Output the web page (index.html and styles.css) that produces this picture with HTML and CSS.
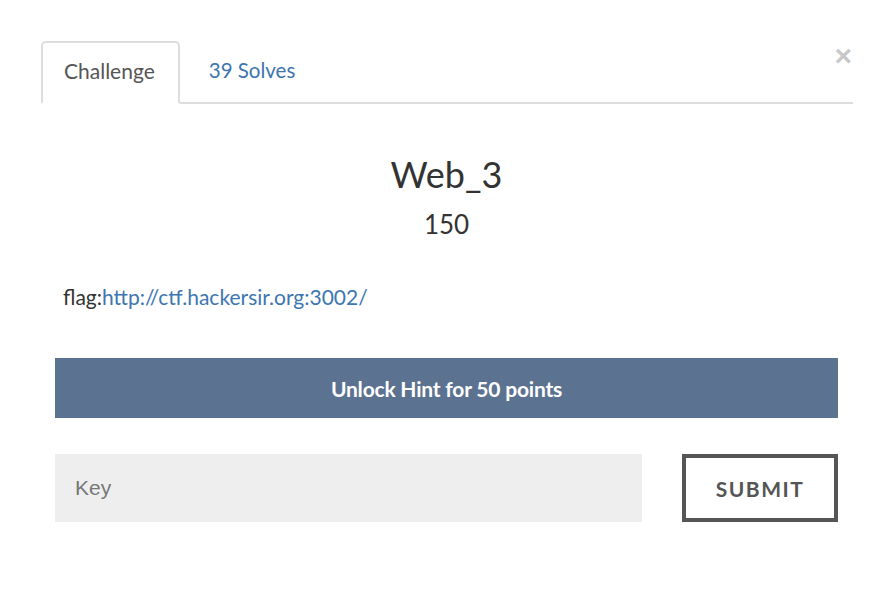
FILE: index.html
```html
<!DOCTYPE html>
<html>
<head>
<meta charset="utf-8">
<link rel="stylesheet" href="styles.css">
</head>
<body>
<div class="modal">
  <div class="tabs">
    <div class="tab active">Challenge</div>
    <div class="tab link">39 Solves</div>
    <div class="close">&times;</div>
  </div>
  <div class="content">
    <h1 class="title">Web_3</h1>
    <div class="points">150</div>
    <p class="desc">flag:<a href="#">http://ctf.hackersir.org:3002/</a></p>
    <div class="hint">Unlock Hint for 50 points</div>
    <div class="submit-row">
      <input class="key" type="text" placeholder="Key">
      <button class="submit">SUBMIT</button>
    </div>
  </div>
</div>
</body>
</html>
```
FILE: styles.css
```css
html, body {
  margin: 0;
  padding: 0;
  background: #fff;
}
body {
  font-family: Lato, "Open Sans", sans-serif;
  color: #333;
}
.modal {
  padding: 41px 38px 0 41px;
}
.tabs {
  position: relative;
  display: flex;
  height: 61px;
  border-bottom: 2px solid #ddd;
}
.tab {
  height: 61px;
  box-sizing: border-box;
  padding: 0 23px 0 21px;
  font-size: 21px;
  line-height: 55px;
  border: 2px solid transparent;
  border-radius: 5px 5px 0 0;
}
.tab.active {
  border-color: #ddd;
  border-bottom-color: #fff;
  height: 63px;
  color: #555;
  background: #fff;
}
.tab.link {
  color: #3d76b0;
  padding-left: 27px;
  font-size: 20.5px;
}
.close {
  position: absolute;
  right: 1px;
  top: 1px;
  font-family: "Liberation Sans", Arial, sans-serif;
  font-weight: bold;
  font-size: 30px;
  color: #c8c8c8;
  line-height: 28px;
}
.content {
  padding: 0 15px 0 14px;
}
.title {
  margin: 48px 0 0;
  text-align: center;
  font-weight: normal;
  font-size: 36px;
  line-height: 44px;
  color: #333;
}
.points {
  text-align: center;
  font-size: 26px;
  line-height: 32px;
  margin-top: 12px;
  color: #333;
}
.desc {
  margin: 44px 0 0 8px;
  font-size: 21px;
  line-height: 26px;
  color: #333;
}
.desc a {
  color: #3d76b0;
  text-decoration: none;
}
.hint {
  margin-top: 48px;
  height: 60px;
  background: #5b7290;
  color: #fff;
  font-weight: bold;
  font-size: 21px;
  letter-spacing: -0.2px;
  display: flex;
  align-items: center;
  justify-content: center;
}
.submit-row {
  margin-top: 36px;
  display: flex;
  justify-content: space-between;
}
.key {
  width: 587px;
  height: 68px;
  box-sizing: border-box;
  border: none;
  background: #eee;
  padding: 0 20px;
  font-family: "Liberation Sans", Arial, sans-serif;
  font-size: 21px;
  color: #555;
  outline: none;
}
.key::placeholder {
  color: #777;
}
.submit {
  width: 156px;
  height: 68px;
  box-sizing: border-box;
  border: 4px solid #555;
  background: #fff;
  font-family: Lato, sans-serif;
  font-weight: bold;
  font-size: 21px;
  letter-spacing: 1.5px;
  color: #555;
  padding: 0;
}
```
